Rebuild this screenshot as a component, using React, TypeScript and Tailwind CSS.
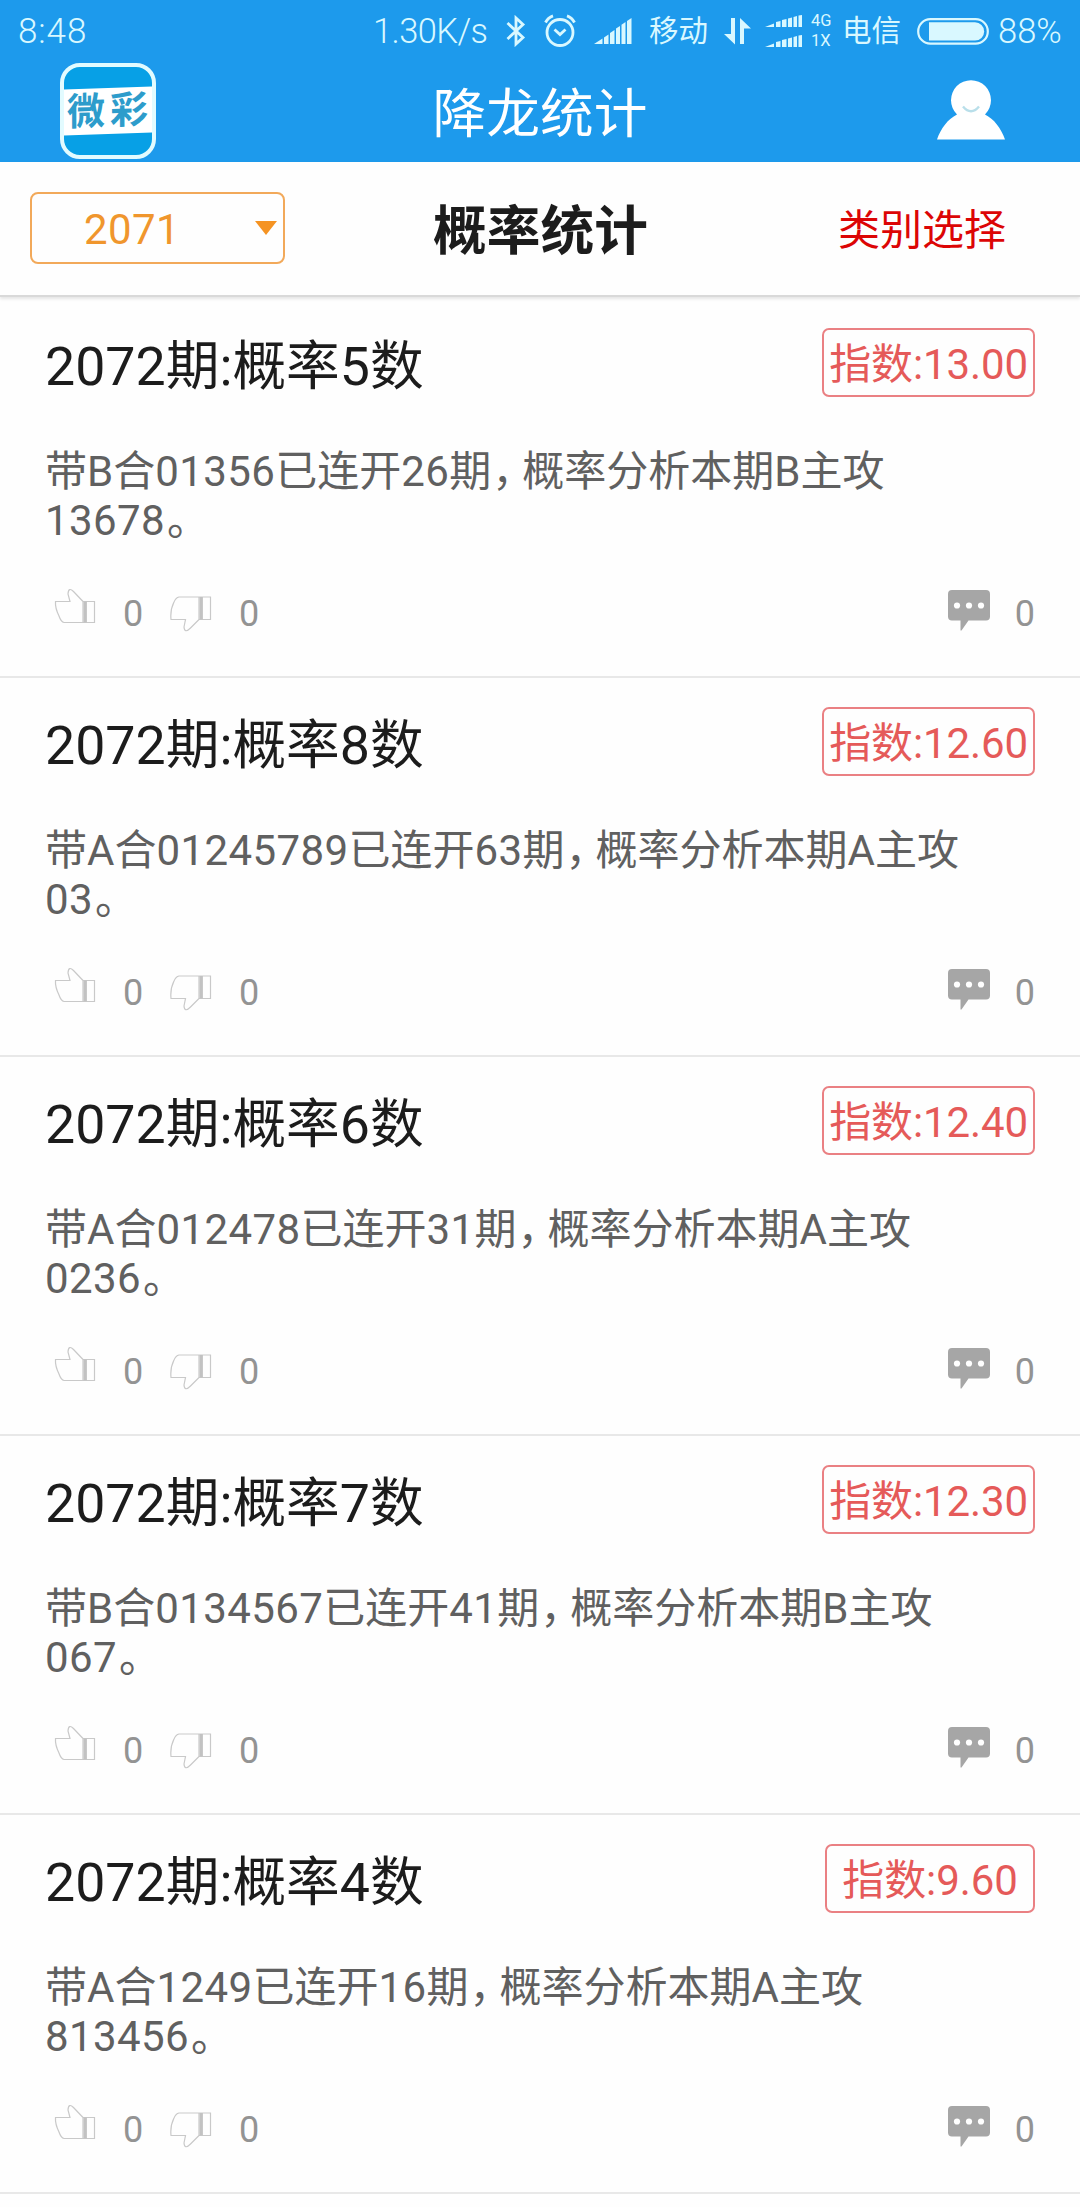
import React from "react";

type Entry = {
  title: string;
  index: string;
  text: string;
};

const entries: Entry[] = [
  { title: "2072期:概率5数", index: "13.00", text: "带B合01356已连开26期，概率分析本期B主攻13678。" },
  { title: "2072期:概率8数", index: "12.60", text: "带A合01245789已连开63期，概率分析本期A主攻03。" },
  { title: "2072期:概率6数", index: "12.40", text: "带A合012478已连开31期，概率分析本期A主攻0236。" },
  { title: "2072期:概率7数", index: "12.30", text: "带B合0134567已连开41期，概率分析本期B主攻067。" },
  { title: "2072期:概率4数", index: "9.60", text: "带A合1249已连开16期，概率分析本期A主攻813456。" },
];

function BluetoothIcon() {
  return (
    <svg width="20" height="32" viewBox="0 0 20 32" fill="none" stroke="currentColor" strokeWidth="2.8" className="shrink-0">
      <path d="M1.5 8 L17 22.5 L10 29 V3 L17 9.5 L1.5 24" />
    </svg>
  );
}

function AlarmIcon() {
  return (
    <svg width="32" height="34" viewBox="0 0 32 34" fill="none" stroke="currentColor" strokeWidth="2.8" className="shrink-0">
      <circle cx="16" cy="18.5" r="13" />
      <path d="M10.5 15.5 L16 20.5 L21.5 15.5" />
      <path d="M1.5 8.5 Q4 3.5 9 1.8 M30.5 8.5 Q28 3.5 23 1.8" />
    </svg>
  );
}

function SignalIcon() {
  return (
    <svg width="38" height="26" viewBox="0 0 38 26" fill="currentColor" className="shrink-0">
      <path d="M0 26 L8.5 20.5 V26 Z" />
      <path d="M10 19.5 L14.5 16.5 V26 H10 Z" />
      <path d="M16 15 L20.5 12 V26 H16 Z" />
      <path d="M22 10.5 L26 8 V26 H22 Z" />
      <path d="M27.5 6.8 L31.5 4 V26 H27.5 Z" />
      <path d="M33 3 L37.5 0 V26 H33 Z" />
    </svg>
  );
}

function SmallSignal() {
  return (
    <svg width="38" height="12" viewBox="0 0 38 12" fill="currentColor">
      <path d="M0 12 L9 8.5 V12 Z" />
      <path d="M11 7 L15.5 6 V12 H11 Z" />
      <path d="M17 5 L21.500 4 V12 H17 Z" />
      <path d="M23 3.500 L27 2.500 V12 H23 Z" />
      <path d="M28.500 2 L32 1 V12 H28.500 Z" />
      <path d="M33.500 0.500 L37 0 V12 H33.500 Z" />
    </svg>
  );
}

function DataArrows() {
  return (
    <svg width="28" height="27" viewBox="0 0 28 27" fill="currentColor" className="shrink-0">
      <path d="M7 0 H11 V26.5 L0 16 H7 Z" />
      <path d="M16 26 V0 L27 10.5 H20 V26 Z" />
    </svg>
  );
}

function BatteryIcon() {
  return (
    <svg width="72" height="27" viewBox="0 0 72 27" fill="none" className="shrink-0">
      <rect x="1.2" y="1.2" width="69.6" height="24.4" rx="12.2" stroke="currentColor" strokeWidth="2.2" />
      <path d="M12 4.2 H58 A9.2 9.2 0 0 1 58 22.6 H12 Z" fill="currentColor" />
    </svg>
  );
}

function StatusBar() {
  return (
    <div className="flex h-[60px] items-center pt-[2px] pl-[18px] text-[35px] font-light text-[#d9f8ff]">
      <span className="w-[355px] pt-[2px] tracking-[0.9px]">8:48</span>
      <span className="w-[133px] pt-[2px] text-[34.5px] tracking-[-0.6px]">1.30K/s</span>
      <BluetoothIcon />
      <span className="ml-[18px] flex">
        <AlarmIcon />
      </span>
      <span className="ml-[18px] flex">
        <SignalIcon />
      </span>
      <span className="ml-[17px] w-[75px] pt-[1px] text-[29.5px] font-normal">移动</span>
      <DataArrows />
      <span className="ml-[13px] flex w-[38px] flex-col gap-[8px]">
        <SmallSignal />
        <SmallSignal />
      </span>
      <span className="ml-[8px] flex w-[31px] flex-col text-[16.500px] leading-[20px] font-normal">
        <span>4G</span>
        <span>1X</span>
      </span>
      <span className="w-[75px] pt-[1px] text-[29.5px] font-normal">电信</span>
      <BatteryIcon />
      <span className="ml-[9px] pt-[2px] text-[34.5px]">88%</span>
    </div>
  );
}

function Logo() {
  return (
    <div className="flex h-[96px] w-[96px] flex-col overflow-hidden rounded-[20px] border-4 border-[#e2fbff] bg-[#07a0e6]">
      <div className="relative mt-[19px] flex h-[50px] items-center justify-center">
        <div className="absolute inset-x-[-4px] inset-y-[2px] -skew-y-2 bg-white" />
        <span className="relative flex -skew-y-2 gap-[5px] text-[38px] leading-none font-bold whitespace-nowrap text-[#2d9ccb]">
          <span>微</span>
          <span>彩</span>
        </span>
      </div>
    </div>
  );
}

function UserIcon() {
  return (
    <svg width="68" height="60" viewBox="0 0 68 60" className="mb-[2px]">
      <path d="M0 59.5 C4 48 11 39 20 34.5 A20 20 0 1 1 48 34.5 C57 39 64 48 68 59.5 Z" fill="#fff" />
      <path d="M26 26.5 Q34 36 42 26.5" fill="none" stroke="#b9dfea" strokeWidth="2.4" />
    </svg>
  );
}

function ThumbUp() {
  return (
    <svg width="42" height="36" viewBox="0 0 42 36" fill="none" stroke="#c9c9c9" strokeWidth="1.2">
      <path d="M29 13.5 L19.5 3.5 Q14.5 -1.5 14 6 L16 13.5 H1.5 Q1 20 5 28 Q7 34 10 34.5 H40.5 V13.5 H29 V34.5" />
      <path d="M31.2 13.5 V34.5" stroke="#c2c2c2" strokeWidth="3.4" />
    </svg>
  );
}

function ThumbDown() {
  return (
    <svg width="42" height="36" viewBox="0 0 42 36" fill="none" stroke="#c9c9c9" strokeWidth="1.2">
      <path d="M29 23.5 L20.5 32 Q14.5 38 14 31 L15.5 23.5 H1 Q0 14 4 6 Q6 1.5 9 1 H40.5 V23.5 H29 V1" />
      <path d="M31.2 1 V23.5" stroke="#c2c2c2" strokeWidth="3.4" />
    </svg>
  );
}

function CommentIcon() {
  return (
    <svg width="42" height="41" viewBox="0 0 42 41">
      <path d="M4 0 H38 Q42 0 42 4 V26.500 Q42 30.500 38 30.500 H20.500 L13.500 40.500 H12.500 V30.500 H4 Q0 30.500 0 26.500 V4 Q0 0 4 0 Z" fill="#a6a6a6" />
      <circle cx="9" cy="15.500" r="3.100" fill="#fff" />
      <circle cx="21" cy="15.500" r="3.100" fill="#fff" />
      <circle cx="33" cy="15.500" r="3.100" fill="#fff" />
    </svg>
  );
}

// Tightens the full-width comma and gives digits slightly looser spacing.
function Analysis({ text }: { text: string }) {
  return (
    <>
      {text.split(/(\d+|，|。)/).map((part, i) => {
        if (part === "，") return <span key={i} className="pl-[1px] tracking-[-12px]">{part}</span>;
        if (part === "。") return <span key={i} className="pl-[2px]">{part}</span>;
        if (/^\d+$/.test(part)) return <span key={i} className="tracking-[0.4px]">{part}</span>;
        return <span key={i}>{part}</span>;
      })}
    </>
  );
}

function Card({ entry }: { entry: Entry }) {
  return (
    <article className="flex h-[379px] flex-col border-b-2 border-[#e8e8e8] pr-[45px] pl-[45px]">
      <div className="mt-[28px] flex h-[70px] items-center justify-between">
        <h2 className="pt-[10px] text-[53.7px] leading-[70px] text-[#1c1c1c]">{entry.title}</h2>
        <span className="flex h-[69px] min-w-[210px] items-center justify-center rounded-[7px] border-2 border-[#ea8083] px-[5px] pt-[5px] text-[42px] leading-none tracking-[-0.1px] text-[#e55a59]">
          指数:{entry.index}
        </span>
      </div>
      <p className="mt-[50px] h-[98px] text-[42px] leading-[49px] text-[#606060]">
        <Analysis text={entry.text} />
      </p>
      <div className="mt-[42px] flex h-[44px] text-[36px] leading-[44px] text-[#939393]">
        <span className="mt-[1px] ml-[9px] w-[69px]">
          <ThumbUp />
        </span>
        <span className="mt-[5px] w-[47px]">0</span>
        <span className="mt-[9px] w-[69px]">
          <ThumbDown />
        </span>
        <span className="mt-[5px]">0</span>
        <span className="mt-[3px] ml-auto">
          <CommentIcon />
        </span>
        <span className="mt-[5px] ml-[25px]">0</span>
      </div>
    </article>
  );
}

export default function App() {
  return (
    <div className="h-[2207px] w-[1080px] overflow-hidden bg-[#fefefe] font-['Roboto','Noto_Sans_CJK_SC',sans-serif]" lang="zh-CN">
      <header className="h-[162px] bg-[#1d9aec]">
        <StatusBar />
        <div className="grid h-[102px] grid-cols-[1fr_auto_1fr] items-center pr-[75px] pl-[60px]">
          <Logo />
          <h1 className="mr-[-15px] pt-[8px] text-[53.7px] leading-[70px] text-white">降龙统计</h1>
          <div className="flex justify-end">
            <UserIcon />
          </div>
        </div>
      </header>
      <div className="grid h-[135px] grid-cols-[1fr_auto_1fr] items-center border-b-2 border-[#d9d9d9] px-[30px] shadow-[0_2px_3px_rgba(0,0,0,0.1)]">
        <div className="mb-[1px] flex h-[72px] w-[255px] items-center justify-between rounded-[8px] border-2 border-[#f2a95a] pr-[6px] pl-[52px] text-[42px] text-[#f0962d]">
          <span className="pt-[3px] tracking-[0.4px]">2071</span>
          <svg width="22" height="14" viewBox="0 0 22 14" fill="#f59322">
            <path d="M0 0 H22 L11 14 Z" />
          </svg>
        </div>
        <h2 className="pt-[7px] pl-[1px] text-[53.7px] leading-[70px] font-bold text-[#1c1c1c]">概率统计</h2>
        <button className="mr-[44px] justify-self-end pt-[4px] text-[42px] text-[#dc0505]">类别选择</button>
      </div>
      <main className="pt-[2px]">
        {entries.map((entry) => (
          <Card key={entry.title} entry={entry} />
        ))}
      </main>
    </div>
  );
}
